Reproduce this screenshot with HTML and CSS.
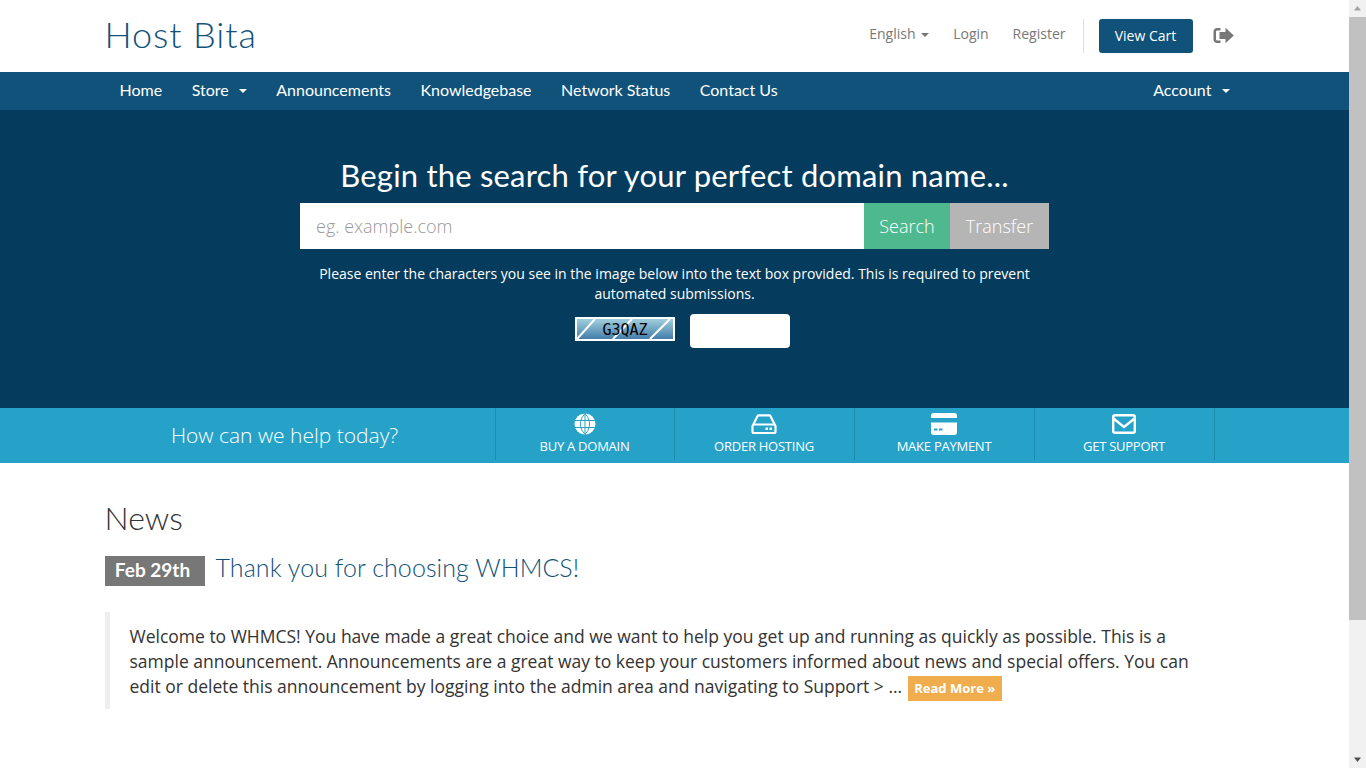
FILE: index.html
```html
<!DOCTYPE html>
<html lang="en">
<head>
  <meta charset="UTF-8" />
  <title>Host Bita - Client Area</title>
  <link rel="stylesheet" href="styles.css">
</head>
<body>
  <div class="page">
    <!-- Top header -->
    <header class="site-header">
      <div class="container header-row">
        <a class="logo" href="#">Host Bita</a>
        <div class="top-links">
          <a href="#">English <span class="caret"></span></a>
          <a href="#">Login</a>
          <a href="#">Register</a>
          <span class="divider"></span>
          <a class="cart-btn" href="#">View Cart</a>
          <a class="logout" href="#" aria-label="Logout">
            <svg width="21" height="17" viewBox="0 0 21 17"><path fill="#777" d="M7.500 1H4.200C2 1 .5 2.600.5 4.600v7.800c0 2 1.500 3.600 3.700 3.600h3.300v-2.500H4.300c-.7 0-1.300-.6-1.300-1.300V4.800c0-.7.6-1.300 1.300-1.300h3.200z"/><path fill="#777" d="M12.500.8v4.200H6.500v7h6v4.200L20.800 8.500z"/></svg>
          </a>
        </div>
      </div>
    </header>

    <!-- Main nav -->
    <nav class="main-nav">
      <div class="container nav-row">
        <a href="#">Home</a>
        <a href="#">Store <span class="caret"></span></a>
        <a href="#">Announcements</a>
        <a href="#">Knowledgebase</a>
        <a href="#">Network Status</a>
        <a href="#">Contact Us</a>
        <a class="nav-right" href="#">Account <span class="caret"></span></a>
      </div>
    </nav>

    <!-- Domain search -->
    <section class="home-search">
      <h2>Begin the search for your perfect domain name...</h2>
      <form class="search-form">
        <input class="search-input" type="text" placeholder="eg. example.com" />
        <button class="btn-search" type="button">Search</button>
        <button class="btn-transfer" type="button">Transfer</button>
      </form>
      <p class="captcha-note">Please enter the characters you see in the image below into the text box provided. This is required to prevent automated submissions.</p>
      <div class="captcha-row">
        <svg class="captcha-img" width="100" height="24" viewBox="0 0 100 24">
          <defs>
            <linearGradient id="capBg" x1="0" y1="0" x2="0" y2="1">
              <stop offset="0" stop-color="#a5d3df" />
              <stop offset="1" stop-color="#3f79a8" />
            </linearGradient>
          </defs>
          <rect x="1" y="1" width="98" height="22" fill="url(#capBg)" stroke="#fff" stroke-width="2" />
          <path d="M2 22 L20 2 M38 22 L57 2 M75 22 L95 2" stroke="#fff" stroke-width="2" fill="none" />
          <text class="captcha-text" x="50" y="18" text-anchor="middle">G3QAZ</text>
        </svg>
        <input class="captcha-input" type="text" />
      </div>
    </section>

    <!-- Shortcuts -->
    <section class="home-shortcuts">
      <div class="container shortcuts-row">
        <p class="lead">How can we help today?</p>
        <ul class="shortcut-list">
          <li><a href="#">
            <svg width="22" height="22" viewBox="0 0 22 22"><circle cx="11" cy="11" r="10.500" fill="#fff"/><path d="M.5 7.500h21M.5 14.500h21M11 .5v21M11 .8C7.500 4 6.500 8 6.500 11s1 7 4.500 10.200M11 .8c3.500 3.200 4.500 7.200 4.500 10.200s-1 7-4.500 10.200" stroke="#26a2c9" stroke-width="1" fill="none"/></svg>
            <span>Buy A Domain</span></a></li>
          <li><a href="#">
            <svg width="26" height="22" viewBox="0 0 26 22"><path fill="none" stroke="#fff" stroke-width="2.200" d="M1.500 13 6.500 3.200c.2-.5.7-.8 1.200-.8h10.600c.5 0 1 .3 1.200.8L24.500 13v5.500c0 .9-.7 1.500-1.500 1.500H3c-.8 0-1.500-.6-1.500-1.500z"/><path stroke="#fff" stroke-width="2" d="M2 11.500h22"/><rect x="14.500" y="14.500" width="2.500" height="2.500" fill="#fff"/><rect x="18.500" y="14.500" width="2.500" height="2.500" fill="#fff"/></svg>
            <span>Order Hosting</span></a></li>
          <li><a href="#">
            <svg width="26" height="22" viewBox="0 0 26 22"><path fill="#fff" d="M2.500 0h21C24.900 0 26 1 26 2.400V5H0V2.400C0 1 1.100 0 2.500 0zM0 9.500h26v10c0 1.400-1.100 2.500-2.500 2.500h-21C1.100 22 0 20.900 0 19.500z"/><path fill="#26a2c9" d="M3 15.500h3.500v2H3zM8 15.500h3.500v2H8z"/></svg>
            <span>Make Payment</span></a></li>
          <li><a href="#">
            <svg width="24" height="20" viewBox="0 0 24 20"><rect x="1.200" y="1.200" width="21.600" height="17.600" rx="1.800" fill="none" stroke="#fff" stroke-width="2.400"/><path d="M1.500 4.500 12 13l10.500-8.500" fill="none" stroke="#fff" stroke-width="2.400"/></svg>
            <span>Get Support</span></a></li>
        </ul>
      </div>
    </section>

    <!-- News -->
    <main class="container news">
      <h2>News</h2>
      <div class="news-head">
        <span class="news-date">Feb 29th</span>
        <a class="news-title" href="#">Thank you for choosing WHMCS!</a>
      </div>
      <blockquote>
        Welcome to WHMCS! You have made a great choice and we want to help you get up and running as quickly as possible. This is a sample announcement. Announcements are a great way to keep your customers informed about news and special offers. You can edit or delete this announcement by logging into the admin area and navigating to Support &gt; ...
        <a class="read-more" href="#">Read More &raquo;</a>
      </blockquote>
    </main>
  </div>

  <!-- Window scrollbar -->
  <div class="scrollbar">
    <svg class="scroll-arrow" width="17" height="17" viewBox="0 0 17 17"><path fill="#a3a3a3" d="M8.500 6 12 10.500H5z"/></svg>
    <div class="scroll-thumb"></div>
    <div class="scroll-rest"></div>
    <svg class="scroll-arrow" width="17" height="17" viewBox="0 0 17 17"><path fill="#505050" d="M8.500 11 5 6.500h7z"/></svg>
  </div>
</body>
</html>
```

FILE: styles.css
```css
/* Global Styles */
* { box-sizing: border-box; }
html, body { height: 100%; }
body {
  margin: 0;
  display: flex;
  height: 768px;
  overflow: hidden;
  font-family: 'Open Sans', sans-serif;
  font-size: 14px;
  color: #333;
  background-color: #fff;
}
a { text-decoration: none; }
.page {
  flex: 1;
  min-width: 0;
}
.container {
  width: 1170px;
  margin: 0 auto;
  padding: 0 15px;
}
.caret {
  display: inline-block;
  width: 0;
  height: 0;
  margin-left: 2px;
  vertical-align: middle;
  border-top: 4px solid;
  border-right: 4px solid transparent;
  border-left: 4px solid transparent;
}

/* Header */
.site-header { height: 72px; }
.header-row {
  display: flex;
  justify-content: space-between;
  align-items: center;
  height: 72px;
}
.logo {
  font-family: 'Lato', sans-serif;
  font-weight: 300;
  font-size: 36px;
  line-height: 40px;
  letter-spacing: 0.9px;
  margin-bottom: 5px;
  color: #10527a;
}
.top-links {
  display: flex;
  align-items: center;
  padding-right: 11px;
}
.top-links a {
  color: #777;
  margin-right: 24px;
  margin-bottom: 5px;
}
.top-links .caret { color: #777; }
.divider {
  width: 1px;
  height: 34px;
  background-color: #ddd;
  margin-right: 15px;
  margin-left: -7px;
}
.top-links .cart-btn {
  display: block;
  width: 94px;
  height: 34px;
  line-height: 34px;
  margin-right: 20px;
  margin-bottom: 0;
  text-align: center;
  color: #fff;
  background-color: #10527a;
  border-radius: 3px;
}
.top-links .logout {
  display: flex;
  margin-right: 0;
  margin-bottom: 2px;
}

/* Main nav */
.main-nav {
  height: 38px;
  background-color: #10527a;
}
.nav-row {
  display: flex;
  align-items: center;
  height: 38px;
  gap: 29.500px;
  padding-left: 30px;
  padding-right: 30px;
  padding-bottom: 4px;
}
.nav-row a {
  font-family: 'Lato', sans-serif;
  font-size: 16px;
  color: #fff;
}
.nav-row .caret { margin-left: 6px; }
.nav-row .nav-right { margin-left: auto; }

/* Domain search */
.home-search {
  height: 298px;
  padding-top: 45px;
  background-color: #053c5e;
  color: #fff;
  text-align: center;
}
.home-search h2 {
  margin: 0;
  font-family: 'Lato', sans-serif;
  font-weight: 400;
  font-size: 31px;
  line-height: 40px;
  letter-spacing: 0.2px;
  color: #fff;
}
.search-form {
  display: flex;
  width: 749px;
  height: 46px;
  margin: 8px auto 0;
}
.search-form input, .search-form button {
  border: 0;
  border-radius: 0;
  font-family: 'Open Sans', sans-serif;
  font-size: 18px;
  font-weight: 300;
}
.search-input {
  flex: 1;
  min-width: 0;
  padding: 0 16px;
  background-color: #fff;
}
.search-input::placeholder { color: #999; opacity: 1; }
.search-form button { color: #fff; }
.btn-search {
  width: 86px;
  background-color: #4eb98e;
}
.btn-transfer {
  width: 99px;
  background-color: #b5b5b5;
}
.captcha-note {
  width: 749px;
  margin: 15px auto 0;
  line-height: 20px;
}
.captcha-row {
  display: flex;
  justify-content: center;
  align-items: center;
  gap: 15px;
  margin-top: 10px;
  padding-left: 16px;
}
.captcha-img { margin-bottom: 4px; }
.captcha-text {
  font-family: 'DejaVu Sans Mono', monospace;
  font-size: 15px;
  fill: #000;
}
.captcha-input {
  width: 100px;
  height: 34px;
  border: 0;
  border-radius: 4px;
  background-color: #fff;
}

/* Shortcuts */
.home-shortcuts {
  height: 55px;
  background-color: #26a2c9;
  color: #fff;
}
.shortcuts-row {
  display: flex;
  height: 55px;
}
.lead {
  width: 360px;
  margin: 0;
  font-size: 21px;
  font-weight: 300;
  line-height: 55px;
  text-align: center;
}
.shortcut-list {
  display: flex;
  height: 52px;
  margin: 0 0 0 30px;
  padding: 0;
  list-style: none;
}
.shortcut-list li {
  width: 180px;
  border-right: 1px solid #1c8cb0;
}
.shortcut-list li:first-child { border-left: 1px solid #1c8cb0; }
.shortcut-list a {
  display: flex;
  flex-direction: column;
  align-items: center;
  height: 52px;
  padding-top: 5px;
  color: #fff;
}
.shortcut-list svg { height: 22px; }
.shortcut-list span {
  margin-top: 2px;
  font-size: 13px;
  line-height: 18px;
  letter-spacing: -0.25px;
  text-transform: uppercase;
}

/* News */
.news h2 {
  margin: 0;
  padding-top: 37px;
  font-family: 'Lato', sans-serif;
  font-weight: 300;
  font-size: 32px;
  line-height: 36px;
  color: #333;
}
.news-head {
  display: flex;
  align-items: flex-start;
  gap: 11px;
  margin-top: 20px;
  height: 30px;
}
.news-date {
  width: 100px;
  height: 30px;
  padding-right: 4px;
  font-family: 'Lato', sans-serif;
  font-weight: 700;
  font-size: 19px;
  line-height: 28px;
  text-align: center;
  color: #fff;
  background-color: #777;
}
.news-title {
  font-family: 'Lato', sans-serif;
  font-weight: 300;
  font-size: 25px;
  line-height: 22px;
  letter-spacing: 0.07px;
  color: #10527a;
}
blockquote {
  margin: 26px 0 0;
  padding: 12px 40px 8px 20px;
  font-size: 17.500px;
  line-height: 25px;
  border-left: 5px solid #eee;
}
.read-more {
  display: inline-block;
  padding: 0 6.500px;
  height: 25px;
  margin-left: 1px;
  font-size: 13px;
  font-weight: 700;
  line-height: 25px;
  color: #fff;
  background-color: #f0ad4e;
  vertical-align: middle;
}

/* Scrollbar */
.scrollbar {
  display: flex;
  flex-direction: column;
  flex: 0 0 17px;
  width: 17px;
  height: 768px;
  background-color: #f1f1f1;
}
.scroll-arrow { flex: 0 0 17px; }
.scroll-thumb {
  height: 603px;
  background-color: #c1c1c1;
}
.scroll-rest { flex: 1; }
```
